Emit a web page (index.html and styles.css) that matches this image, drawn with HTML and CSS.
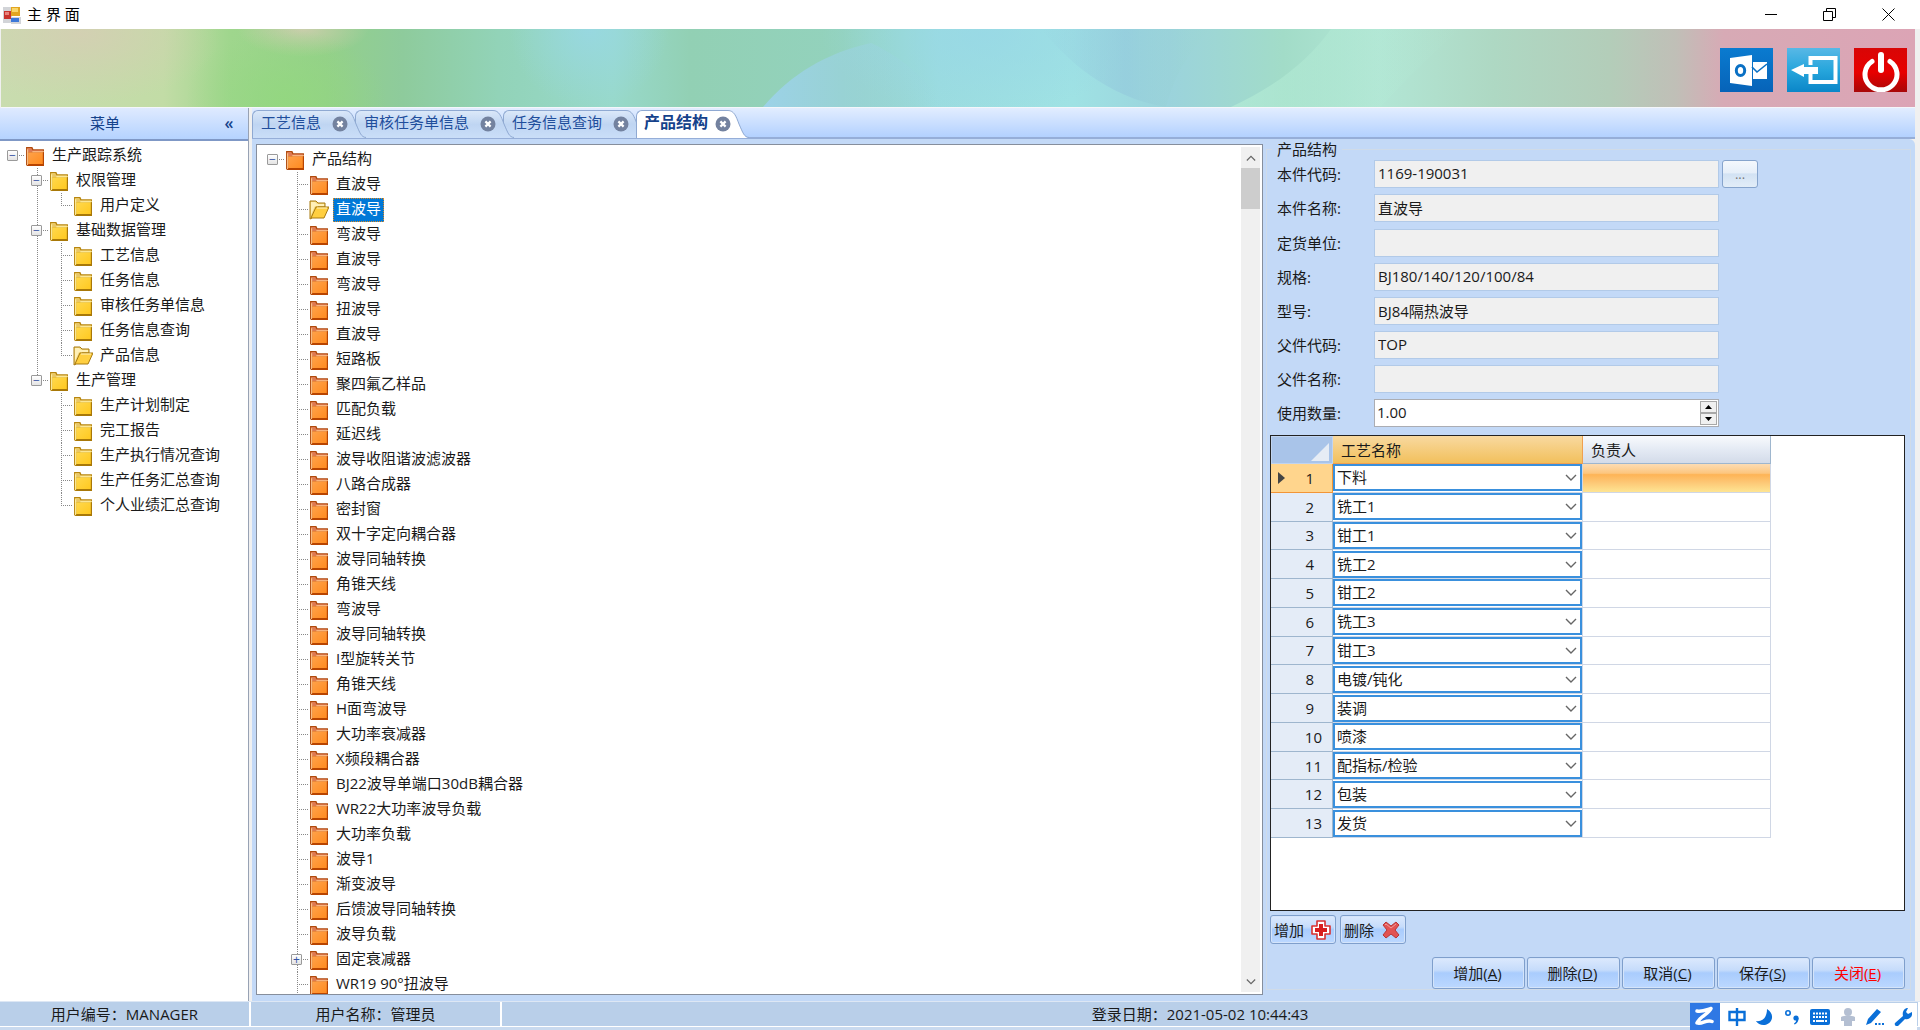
FILE: index.html
```html
<!DOCTYPE html>
<html lang="zh-CN">
<head>
<meta charset="utf-8">
<title>主界面</title>
<link rel="stylesheet" href="styles.css">
</head>
<body>
<svg class="defs" width="0" height="0" aria-hidden="true">
  <defs>
    <linearGradient id="gy" x1="0" y1="0" x2="1" y2="1"><stop offset="0" stop-color="#ffd84d"/><stop offset="1" stop-color="#ffc81e"/></linearGradient>
    <linearGradient id="go" x1="0" y1="0" x2="1" y2="1"><stop offset="0" stop-color="#ffa24a"/><stop offset="1" stop-color="#ff8a1e"/></linearGradient>
    <linearGradient id="tabFill" x1="0" y1="0" x2="0" y2="1"><stop offset="0" stop-color="#dbe8f9"/><stop offset=".5" stop-color="#bfd5f2"/><stop offset="1" stop-color="#cadef8"/></linearGradient>
  </defs>
  <symbol id="fy" viewBox="0 0 19 19">
    <path d="M1 1h6l1 2h10v16H2L1 18z" fill="#b8860f"/><path d="M2 2h4l1 2h10v2H2z" fill="#e9c765"/><path d="M3 6h14v12H3z" fill="url(#gy)"/><path d="M7 5h11v1H7zM2 3h1v15H2z" fill="#fff1a8"/><path d="M3 17h15v2H3zM17 6h1v12h-1z" fill="#a87808"/>
  </symbol>
  <symbol id="fo" viewBox="0 0 19 19">
    <path d="M1 1h6l1 2h10v16H2L1 18z" fill="#b04a0c"/><path d="M2 2h4l1 2h10v2H2z" fill="#dd7a52"/><path d="M3 6h14v12H3z" fill="url(#go)"/><path d="M7 5h11v1H7zM2 3h1v15H2z" fill="#ffc890"/><path d="M3 17h15v2H3zM17 6h1v12h-1z" fill="#b84400"/>
  </symbol>
  <symbol id="fopen" viewBox="0 0 20 20">
    <path d="M1 19V1h6l2 2h7v4H9L3 18z" fill="#f3d77a" stroke="#a87a10"/><path d="M2 2h4l2 2h7v2H6L2 15z" fill="#fff0b8"/><path d="M7 7h13l-5 11H2z" fill="#ffcf40" stroke="#a87a10"/><path d="M8 8h10" stroke="#fff3c0"/>
  </symbol>
  <symbol id="cx" viewBox="0 0 16 16">
    <circle cx="8" cy="8" r="7.5" fill="#73829f"/><path d="M5.4 5.4l5.2 5.2M10.600 5.400l-5.200 5.200" stroke="#fff" stroke-width="2.200"/>
  </symbol>
  <symbol id="cap" viewBox="0 0 22 28">
    <path d="M0 0H1C7 0 9 6 12 14C16 23 17 27 22 28H0Z" fill="var(--tab)"/><path d="M0 .5H1C7 .5 9 6 12 14C16 23 17 27 22 27.500" fill="none" stroke="#8fa9d2"/>
  </symbol>
  <symbol id="chev" viewBox="0 0 12 8"><path d="M1 1l5 5 5-5" fill="none" stroke="#666" stroke-width="1.400"/></symbol>
</svg>

<header class="titlebar">
  <svg width="18" height="18" viewBox="0 0 18 18" aria-hidden="true"><path d="M0 1h9v16H0zM8 11h10v7H8z" fill="#d2d4d8"/><path d="M1 5h7v8H1z" fill="#c8322c"/><path d="M2 6h4v3H2z" fill="#e8837c"/><path d="M8 1h9v9H8z" fill="#e2a520"/><path d="M9 2h6v4H9z" fill="#f8d66a"/><path d="M8 12h8v4H8z" fill="#3c78d8"/></svg>
  <h1>主 界 面</h1>
  <div class="winbtns">
    <button aria-label="最小化"><svg width="12" height="12"><path d="M0 5.500h12" stroke="#000"/></svg></button>
    <button aria-label="还原"><svg width="13" height="13"><path d="M.5 3.500h9v9h-9zM3.500 3.500v-3h9v9h-3" fill="none" stroke="#000"/></svg></button>
    <button aria-label="关闭"><svg width="13" height="13"><path d="M.5.5l12 12M12.500.5l-12 12" stroke="#000"/></svg></button>
  </div>
</header>

<div class="banner">
  <svg class="art" viewBox="0 0 1914 78" preserveAspectRatio="none" aria-hidden="true">
    <defs>
      <linearGradient id="b0">
        <stop offset="0" stop-color="#c9dcaf"/><stop offset=".085" stop-color="#c2dca6"/><stop offset=".12" stop-color="#9fd68d"/><stop offset=".17" stop-color="#94d08a"/><stop offset=".21" stop-color="#8ecb9c"/><stop offset=".26" stop-color="#92d3b8"/><stop offset=".32" stop-color="#98d9cb"/><stop offset=".36" stop-color="#92d0b4"/><stop offset=".44" stop-color="#93d2bd"/><stop offset=".49" stop-color="#9bdcdf"/><stop offset=".56" stop-color="#9fe2e4"/><stop offset=".61" stop-color="#9bd3dc"/><stop offset=".67" stop-color="#a2dcc8"/><stop offset=".72" stop-color="#b2e6d5"/><stop offset=".78" stop-color="#aed8c3"/><stop offset=".84" stop-color="#b3cdb9"/><stop offset=".875" stop-color="#c0bfb7"/><stop offset=".9" stop-color="#d7aab5"/><stop offset="1" stop-color="#dca4b5"/>
      </linearGradient>
      <radialGradient id="b1"><stop offset="0" stop-color="#d6cdb4" stop-opacity=".8"/><stop offset="1" stop-color="#d6cdb4" stop-opacity="0"/></radialGradient>
      <radialGradient id="b2"><stop offset="0" stop-color="#98d8e6" stop-opacity=".8"/><stop offset="1" stop-color="#98d8e6" stop-opacity="0"/></radialGradient>
      <radialGradient id="b3"><stop offset="0" stop-color="#92d87e" stop-opacity=".8"/><stop offset="1" stop-color="#92d87e" stop-opacity="0"/></radialGradient>
      <linearGradient id="b4" x1="0" x2="1"><stop offset="0" stop-color="#9cd2e8"/><stop offset="1" stop-color="#9cd2e4" stop-opacity="0"/></linearGradient>
      <linearGradient id="b5" x1="0" x2="1"><stop offset="0" stop-color="#92c8dc" stop-opacity="0"/><stop offset=".5" stop-color="#92c8dc" stop-opacity=".6"/><stop offset="1" stop-color="#9cd8cc" stop-opacity="0"/></linearGradient>
      <linearGradient id="b6" x1="0" x2="1"><stop offset="0" stop-color="#b4ecd6" stop-opacity=".7"/><stop offset="1" stop-color="#b4ecd6" stop-opacity="0"/></linearGradient>
    </defs>
    <path d="M0 0h1914v78H0z" fill="url(#b0)"/>
    <ellipse cx="80" cy="5" rx="140" ry="70" fill="url(#b1)"/>
    <ellipse cx="302" cy="0" rx="66" ry="28" fill="url(#b1)"/>
    <ellipse cx="285" cy="70" rx="100" ry="70" fill="url(#b3)"/>
    <ellipse cx="588" cy="0" rx="80" ry="80" fill="url(#b2)"/>
    <ellipse cx="980" cy="5" rx="160" ry="80" fill="url(#b2)"/>
    <path d="M762 78C790 45 825 24 870 14C905 30 930 55 942 78z" fill="url(#b4)"/>
    <path d="M1040 0h170c-30 30-40 60-45 78c-60-10-100-48-125-78z" fill="url(#b5)"/>
    <path d="M1230 78C1280 55 1310 28 1330 0h130c-30 25-60 55-80 78z" fill="url(#b6)"/>
  </svg>
  <nav class="quick">
    <button aria-label="邮件"><svg viewBox="0 0 53 44"><defs><linearGradient id="q1" x2="0" y2="1"><stop stop-color="#0a7bd0"/><stop offset="1" stop-color="#0763b8"/></linearGradient><linearGradient id="q2" x2="0" y2="1"><stop stop-color="#58b8e6"/><stop offset=".5" stop-color="#27a6dc"/><stop offset="1" stop-color="#0b86c8"/></linearGradient><linearGradient id="q3" x2="0" y2="1"><stop stop-color="#d80606"/><stop offset=".55" stop-color="#e80000"/><stop offset="1" stop-color="#a80808"/></linearGradient></defs><path d="M0 0h53v44H0z" fill="url(#q1)"/><path d="M10 10l22-3v31l-22-3z" fill="#fff"/><ellipse cx="20.500" cy="22.500" rx="4.200" ry="5" fill="none" stroke="#0a70c4" stroke-width="3"/><path d="M33 14h14v17H33z" fill="#fff"/><path d="M32 19l5 5 10-8" fill="none" stroke="#0a70c4" stroke-width="1.600"/></svg></button>
    <button aria-label="注销"><svg viewBox="0 0 53 44"><path d="M0 0h53v44H0z" fill="url(#q2)"/><path d="M23.500 17V10h25v24h-25v-8" fill="none" stroke="#fff" stroke-width="4"/><path d="M4 22l13-6v3h14v7H17v3z" fill="#fff"/></svg></button>
    <button aria-label="退出"><svg viewBox="0 0 53 44"><path d="M0 0h53v44H0z" fill="url(#q3)"/><path d="M18 13.500A16 15.500 0 1 0 36 13.500" fill="none" stroke="#fff" stroke-width="5" stroke-linecap="round"/><path d="M27 7v15" stroke="#fff" stroke-width="6" stroke-linecap="round"/></svg></button>
  </nav>
</div>

<div class="workspace">
  <aside class="sidebar">
    <div class="sidehead"><h2>菜单</h2><button aria-label="收起">«</button></div>
    <ul class="tree root">
      <li><div class="row"><button class="tg" aria-label="折叠">−</button><svg><use href="#fo"/></svg><span>生产跟踪系统</span></div>
        <ul>
          <li><div class="row"><button class="tg" aria-label="折叠">−</button><svg><use href="#fy"/></svg><span>权限管理</span></div>
            <ul><li><div class="row"><i></i><svg><use href="#fy"/></svg><span>用户定义</span></div></li></ul></li>
          <li><div class="row"><button class="tg" aria-label="折叠">−</button><svg><use href="#fy"/></svg><span>基础数据管理</span></div>
            <ul>
              <li><div class="row"><i></i><svg><use href="#fy"/></svg><span>工艺信息</span></div></li>
              <li><div class="row"><i></i><svg><use href="#fy"/></svg><span>任务信息</span></div></li>
              <li><div class="row"><i></i><svg><use href="#fy"/></svg><span>审核任务单信息</span></div></li>
              <li><div class="row"><i></i><svg><use href="#fy"/></svg><span>任务信息查询</span></div></li>
              <li><div class="row"><i></i><svg><use href="#fopen"/></svg><span>产品信息</span></div></li>
            </ul></li>
          <li><div class="row"><button class="tg" aria-label="折叠">−</button><svg><use href="#fy"/></svg><span>生产管理</span></div>
            <ul>
              <li><div class="row"><i></i><svg><use href="#fy"/></svg><span>生产计划制定</span></div></li>
              <li><div class="row"><i></i><svg><use href="#fy"/></svg><span>完工报告</span></div></li>
              <li><div class="row"><i></i><svg><use href="#fy"/></svg><span>生产执行情况查询</span></div></li>
              <li><div class="row"><i></i><svg><use href="#fy"/></svg><span>生产任务汇总查询</span></div></li>
              <li><div class="row"><i></i><svg><use href="#fy"/></svg><span>个人业绩汇总查询</span></div></li>
            </ul></li>
        </ul></li>
    </ul>
  </aside>

  <main class="main">
    <nav class="tabs">
      <div class="tab t1"><a href="#">工艺信息</a><button aria-label="关闭"><svg><use href="#cx"/></svg></button><svg class="cap"><use href="#cap"/></svg></div>
      <div class="tab t2"><a href="#">审核任务单信息</a><button aria-label="关闭"><svg><use href="#cx"/></svg></button><svg class="cap"><use href="#cap"/></svg></div>
      <div class="tab t3"><a href="#">任务信息查询</a><button aria-label="关闭"><svg><use href="#cx"/></svg></button><svg class="cap"><use href="#cap"/></svg></div>
      <div class="tab active"><a href="#">产品结构</a><button aria-label="关闭"><svg><use href="#cx"/></svg></button><svg class="cap"><use href="#cap"/></svg></div>
    </nav>
    <div class="page">
      <section class="treebox">
        <ul class="tree">
          <li><div class="row"><button class="tg" aria-label="折叠">−</button><svg><use href="#fo"/></svg><span>产品结构</span></div>
            <ul class="open">
              <li><div class="row"><i></i><svg><use href="#fo"/></svg><span>直波导</span></div></li>
              <li><div class="row"><i></i><svg><use href="#fopen"/></svg><span class="sel">直波导</span></div></li>
              <li><div class="row"><i></i><svg><use href="#fo"/></svg><span>弯波导</span></div></li>
              <li><div class="row"><i></i><svg><use href="#fo"/></svg><span>直波导</span></div></li>
              <li><div class="row"><i></i><svg><use href="#fo"/></svg><span>弯波导</span></div></li>
              <li><div class="row"><i></i><svg><use href="#fo"/></svg><span>扭波导</span></div></li>
              <li><div class="row"><i></i><svg><use href="#fo"/></svg><span>直波导</span></div></li>
              <li><div class="row"><i></i><svg><use href="#fo"/></svg><span>短路板</span></div></li>
              <li><div class="row"><i></i><svg><use href="#fo"/></svg><span>聚四氟乙样品</span></div></li>
              <li><div class="row"><i></i><svg><use href="#fo"/></svg><span>匹配负载</span></div></li>
              <li><div class="row"><i></i><svg><use href="#fo"/></svg><span>延迟线</span></div></li>
              <li><div class="row"><i></i><svg><use href="#fo"/></svg><span>波导收阻谐波滤波器</span></div></li>
              <li><div class="row"><i></i><svg><use href="#fo"/></svg><span>八路合成器</span></div></li>
              <li><div class="row"><i></i><svg><use href="#fo"/></svg><span>密封窗</span></div></li>
              <li><div class="row"><i></i><svg><use href="#fo"/></svg><span>双十字定向耦合器</span></div></li>
              <li><div class="row"><i></i><svg><use href="#fo"/></svg><span>波导同轴转换</span></div></li>
              <li><div class="row"><i></i><svg><use href="#fo"/></svg><span>角锥天线</span></div></li>
              <li><div class="row"><i></i><svg><use href="#fo"/></svg><span>弯波导</span></div></li>
              <li><div class="row"><i></i><svg><use href="#fo"/></svg><span>波导同轴转换</span></div></li>
              <li><div class="row"><i></i><svg><use href="#fo"/></svg><span>I型旋转关节</span></div></li>
              <li><div class="row"><i></i><svg><use href="#fo"/></svg><span>角锥天线</span></div></li>
              <li><div class="row"><i></i><svg><use href="#fo"/></svg><span>H面弯波导</span></div></li>
              <li><div class="row"><i></i><svg><use href="#fo"/></svg><span>大功率衰减器</span></div></li>
              <li><div class="row"><i></i><svg><use href="#fo"/></svg><span>X频段耦合器</span></div></li>
              <li><div class="row"><i></i><svg><use href="#fo"/></svg><span>BJ22波导单端口30dB耦合器</span></div></li>
              <li><div class="row"><i></i><svg><use href="#fo"/></svg><span>WR22大功率波导负载</span></div></li>
              <li><div class="row"><i></i><svg><use href="#fo"/></svg><span>大功率负载</span></div></li>
              <li><div class="row"><i></i><svg><use href="#fo"/></svg><span>波导1</span></div></li>
              <li><div class="row"><i></i><svg><use href="#fo"/></svg><span>渐变波导</span></div></li>
              <li><div class="row"><i></i><svg><use href="#fo"/></svg><span>后馈波导同轴转换</span></div></li>
              <li><div class="row"><i></i><svg><use href="#fo"/></svg><span>波导负载</span></div></li>
              <li><div class="row"><button class="tg" aria-label="展开">+</button><svg><use href="#fo"/></svg><span>固定衰减器</span></div></li>
              <li><div class="row"><i></i><svg><use href="#fo"/></svg><span>WR19 90°扭波导</span></div></li>
            </ul></li>
        </ul>
        <div class="scroll">
          <button class="up" aria-label="向上"><svg><use href="#chev"/></svg></button>
          <div class="thumb"></div>
          <button class="down" aria-label="向下"><svg><use href="#chev"/></svg></button>
        </div>
      </section>

      <fieldset class="detail">
        <legend>产品结构</legend>
        <div class="body">
          <div class="fields">
            <div class="field"><label for="f1">本件代码:</label><input id="f1" value="1169-190031" readonly><button class="more">...</button></div>
            <div class="field"><label for="f2">本件名称:</label><input id="f2" value="直波导" readonly></div>
            <div class="field next"><label for="f3">定货单位:</label><input id="f3" readonly></div>
            <div class="field"><label for="f4">规格:</label><input id="f4" value="BJ180/140/120/100/84" readonly></div>
            <div class="field"><label for="f5">型号:</label><input id="f5" value="BJ84隔热波导" readonly></div>
            <div class="field"><label for="f6">父件代码:</label><input id="f6" value="TOP" readonly></div>
            <div class="field"><label for="f7">父件名称:</label><input id="f7" readonly></div>
            <div class="field"><label for="f8">使用数量:</label><div class="num"><input id="f8" value="1.00"><div class="spin"><button aria-label="增"><svg width="7" height="4"><path d="M0 4l3.500-4L7 4z"/></svg></button><button aria-label="减"><svg width="7" height="4"><path d="M0 0l3.500 4L7 0z"/></svg></button></div></div></div>
          </div>
          <div class="gridbox">
            <table>
              <colgroup><col class="c0"><col class="c1"><col class="c2"></colgroup>
              <thead><tr><th class="corner"><svg width="18" height="18"><path d="M18 0v18H0z" fill="#e6ecf5"/></svg></th><th class="hot">工艺名称</th><th>负责人</th></tr></thead>
              <tbody>
                <tr class="cur"><th><svg width="7" height="12"><path d="M0 0l7 6-7 6z" fill="#444"/></svg>1</th><td><div class="combo"><select aria-label="工艺 1"><option>下料</option></select><svg><use href="#chev"/></svg></div></td><td></td></tr>
                <tr><th>2</th><td><div class="combo"><select aria-label="工艺 2"><option>铣工1</option></select><svg><use href="#chev"/></svg></div></td><td></td></tr>
                <tr><th>3</th><td><div class="combo"><select aria-label="工艺 3"><option>钳工1</option></select><svg><use href="#chev"/></svg></div></td><td></td></tr>
                <tr><th>4</th><td><div class="combo"><select aria-label="工艺 4"><option>铣工2</option></select><svg><use href="#chev"/></svg></div></td><td></td></tr>
                <tr><th>5</th><td><div class="combo"><select aria-label="工艺 5"><option>钳工2</option></select><svg><use href="#chev"/></svg></div></td><td></td></tr>
                <tr><th>6</th><td><div class="combo"><select aria-label="工艺 6"><option>铣工3</option></select><svg><use href="#chev"/></svg></div></td><td></td></tr>
                <tr><th>7</th><td><div class="combo"><select aria-label="工艺 7"><option>钳工3</option></select><svg><use href="#chev"/></svg></div></td><td></td></tr>
                <tr><th>8</th><td><div class="combo"><select aria-label="工艺 8"><option>电镀/钝化</option></select><svg><use href="#chev"/></svg></div></td><td></td></tr>
                <tr><th>9</th><td><div class="combo"><select aria-label="工艺 9"><option>装调</option></select><svg><use href="#chev"/></svg></div></td><td></td></tr>
                <tr><th>10</th><td><div class="combo"><select aria-label="工艺 10"><option>喷漆</option></select><svg><use href="#chev"/></svg></div></td><td></td></tr>
                <tr><th>11</th><td><div class="combo"><select aria-label="工艺 11"><option>配指标/检验</option></select><svg><use href="#chev"/></svg></div></td><td></td></tr>
                <tr><th>12</th><td><div class="combo"><select aria-label="工艺 12"><option>包装</option></select><svg><use href="#chev"/></svg></div></td><td></td></tr>
                <tr><th>13</th><td><div class="combo"><select aria-label="工艺 13"><option>发货</option></select><svg><use href="#chev"/></svg></div></td><td></td></tr>
              </tbody>
            </table>
          </div>
          <div class="rowbtns">
            <button class="btn">增加<svg width="20" height="20" viewBox="0 0 20 20"><path d="M6 1h8v5h5v8h-5v5H6v-5H1V6h5z" fill="#fff" stroke="#d83030" stroke-width="1.600" stroke-linejoin="round"/><path d="M8 4h4v4h4v4h-4v4H8v-4H4V8h4z" fill="#d81e1e"/></svg></button>
            <button class="btn">删除<svg width="20" height="20" viewBox="0 0 20 20"><path d="M2 5l3-3 5 4 5-4 3 3-4 5 4 5-3 3-5-4-5 4-3-3 4-5z" fill="#e25252" stroke="#b83636" stroke-linejoin="round"/><path d="M4 5l1-1 5 4 5-4" fill="none" stroke="#f09a9a"/></svg></button>
          </div>
          <div class="actions">
            <button class="btn">增加(<u>A</u>)</button><button class="btn">删除(<u>D</u>)</button><button class="btn">取消(<u>C</u>)</button><button class="btn">保存(<u>S</u>)</button><button class="btn red">关闭(<u>E</u>)</button>
          </div>
        </div>
      </fieldset>
    </div>
  </main>
</div>

<footer class="status">
  <div class="s1">用户编号：MANAGER</div>
  <div class="s2">用户名称：管理员</div>
  <div class="s3">登录日期：2021-05-02 10:44:43</div>
  <div class="ime">
    <svg class="logo" width="30" height="27" viewBox="0 0 30 27"><path d="M0 0h30v27H0z" fill="#2f78e4"/><path d="M7 8c5 1 9-1 14-2.500c-1 3-6 6-9 8.500s-3 3-5 6c5 2 9-4 15-1.500" fill="none" stroke="#fff" stroke-width="3.500" stroke-linecap="round" stroke-linejoin="round"/></svg>
    <svg width="18" height="18" viewBox="0 0 18 18"><path d="M1.500 4h15v8h-15zM9 0v18" fill="none" stroke="#0a6fd8" stroke-width="2.400"/></svg>
    <svg width="18" height="18" viewBox="0 0 18 18"><path d="M11 1c8 5 6 14-2 16C5 17.500 2 16 0 13c7 1 11-4 11-12z" fill="#0a6fd8"/></svg>
    <svg width="16" height="18" viewBox="0 0 16 18"><circle cx="4" cy="5" r="2.200" fill="none" stroke="#0a6fd8" stroke-width="1.600"/><circle cx="12" cy="10" r="2.600" fill="#0a6fd8"/><path d="M14.500 10c0 4-2 6-4 6.500l-.5-1c2-1 2.500-3 2-5z" fill="#0a6fd8"/></svg>
    <svg width="20" height="16" viewBox="0 0 20 16"><rect width="20" height="16" rx="2" fill="#0a6fd8"/><path d="M3 4.500h14M3 8h14" stroke="#fff" stroke-width="2" stroke-dasharray="2 1"/><path d="M3 12h2m1 0h8m1 0h2" stroke="#fff" stroke-width="2"/></svg>
    <svg width="16" height="18" viewBox="0 0 16 18"><circle cx="8" cy="4" r="4" fill="#b4bfd2"/><path d="M1 9c4-2 10-2 14 0v4h-3v5H4v-5H1z" fill="#b4bfd2"/></svg>
    <svg width="18" height="18" viewBox="0 0 18 18"><path d="M0 17l2-6L11 1l4 3L5 15zM9 15h2v2H9zM12.500 15h2v2h-2zM16 15h2v2h-2z" fill="#0a6fd8"/></svg>
    <svg width="18" height="18" viewBox="0 0 18 18"><path d="M1 15l8-7C8 4 10 0 14 0l-2 4 2 2 4-2c1 5-3 8-7 7l-7 7c-2 1-4-1-3-3z" fill="#0a6fd8"/></svg>
  </div>
</footer>
</body>
</html>
```

FILE: styles.css
```css
* { box-sizing: border-box; }
body {
  margin: 0; height: 100vh; display: flex; flex-direction: column; overflow: hidden;
  font: 15px/20px "Open Sans", "Noto Sans CJK SC", sans-serif; color: #1a1a1a; background: #f0f0f0;
}
button, input, select { font: inherit; color: inherit; margin: 0; padding: 0; }
button { background: none; border: 0; }
h1, h2 { margin: 0; font-size: 15px; font-weight: 400; }
ul { list-style: none; margin: 0; padding: 0; }
.defs { position: absolute; }

.titlebar { flex: none; height: 29px; display: flex; align-items: center; background: #fff; padding: 0 25px 0 3px; }
.titlebar h1 { margin-left: 6px; color: #000; padding-bottom: 1px; }
.winbtns { margin-left: auto; display: flex; gap: 46px; }
.winbtns button { width: 13px; height: 20px; display: flex; align-items: center; justify-content: center; }

.banner { flex: none; height: 79px; display: flex; align-items: center; justify-content: flex-end; position: relative; margin: 0 5px 0 1px; padding-right: 8px; border-bottom: 1px solid #f4f6fa; }
.art { position: absolute; inset: 0; width: 100%; height: 100%; }
.quick { display: flex; gap: 14px; position: relative; padding-top: 3px; }
.quick button { width: 53px; height: 44px; }
.quick svg { display: block; width: 53px; height: 44px; }

.workspace { flex: 1; min-height: 0; display: flex; gap: 3px; padding-right: 5px; }
.sidebar { flex: none; width: 249px; background: #fff; border-right: 1px solid #98a2b4; }
.sidehead { height: 33px; display: flex; align-items: center; border-bottom: 2px solid #7f98c6; background: linear-gradient(#dfeaff, #b5d3ff); color: #15428b; padding: 0 12px 2px 0; }
.sidehead h2 { flex: 1; text-align: center; padding-right: 12px; }
.sidehead button { font-size: 16px; font-weight: 600; width: 14px; }

.tree { padding: 2px 0 0 1px; }
.tree ul { padding-left: 24px; }
.tree li li { background: repeating-linear-gradient(#888 0 1px, transparent 1px 2px) 12px 0 / 1px 100% no-repeat; }
.tree li li:last-child { background-size: 1px 13px; }
.tree .open > li:last-child { background-size: 1px 100%; }
.row { display: flex; align-items: center; height: 25px; background: repeating-linear-gradient(90deg, #888 0 1px, transparent 1px 2px) 12px 12px / 12px 1px no-repeat; }
.row > i { width: 24px; }
.row svg { flex: none; width: 20px; height: 20px; }
.row span { margin-left: 4px; padding: 0 3px; height: 24px; line-height: 21px; white-space: nowrap; }
.row .sel { background: #0078d7; color: #fff; outline: 1px dotted #e08a20; outline-offset: -1px; }
.tg { width: 11px; height: 11px; margin: 0 7px 0 6px; border: 1px solid #9a9a9a; border-radius: 1px; background: linear-gradient(#fff, #e4e4e4); color: #3454a4; font-size: 12px; line-height: 9px; display: flex; align-items: center; justify-content: center; }

.main { flex: 1; min-width: 0; display: flex; flex-direction: column; }
.tabs { flex: none; height: 31px; display: flex; align-items: flex-start; padding-top: 2px; border-bottom: 2px solid #96aed8; background: linear-gradient(#e2edff, #b3d1ff); }
.tab { --tab: url(#tabFill); position: relative; display: flex; align-items: center; height: 28px; border: solid #8fa9d2; border-width: 1px 0 0 1px; border-radius: 6px 0 0 0; padding-left: 8px; background: linear-gradient(#dbe8f9, #bfd5f2 50%, #cadef8); margin-right: 11px; }
.t1 { z-index: 3; }
.t2 { z-index: 2; }
.t3 { z-index: 1; }
.tab a { color: #1f4e9c; text-decoration: none; line-height: 20px; padding-bottom: 6px; }
.tab button { position: relative; z-index: 1; width: 16px; height: 16px; margin: 0 -4px 2px 11px; }
.tab button svg { display: block; width: 16px; height: 16px; }
.cap { position: absolute; left: 100%; top: -1px; width: 22px; height: 28px; }
.active { --tab: #fff; z-index: 4; background: #fff; padding-left: 7px; }
.active a { font-size: 16px; font-weight: 700; color: #15428b; }
.active button { margin-left: 7px; }

.page { flex: 1; min-height: 0; display: flex; gap: 3px; background: #c3d9f7; padding: 0 4px 6px; border-radius: 0 6px 0 0; }
.treebox { flex: 1; min-width: 0; display: flex; margin-top: 5px; background: #fff; border: 1px solid #868e9c; overflow: hidden; }
.treebox .tree { flex: 1; padding: 2px 0 0 4px; }
.scroll { width: 19px; margin: 2px 2px 2px 0; background: #f0f0f0; display: flex; flex-direction: column; }
.scroll button { height: 21px; display: flex; align-items: center; justify-content: center; }
.scroll svg { width: 10px; height: 8px; }
.up svg { transform: rotate(180deg); }
.down { margin-top: auto; }
.thumb { height: 41px; background: #cdcdcd; }

.detail { flex: none; width: 645px; min-width: 0; margin: 0 0 5px; padding: 0 5px 0 3px; border: 1px solid #d0dbe8; display: flex; flex-direction: column; }
.detail legend { padding: 0 5px; margin-left: 2px; line-height: 20px; }
.body { flex: 1; min-height: 0; display: flex; flex-direction: column; }
.fields { display: flex; flex-direction: column; gap: 6px; padding: 1px 0 8px 7px; }
.field { display: flex; align-items: center; height: 28px; }
.field.next { margin-top: 1px; }
.field label { width: 97px; }
.field input { width: 345px; height: 28px; border: 1px solid #b2cae8; background: #f0f0f0; padding: 0 0 2px 3px; outline: 0; }
.more { width: 36px; height: 28px; margin-left: 3px; border: 1px solid #86a4cc; border-radius: 3px; background: linear-gradient(#f4f8fd, #e6eff9 45%, #d2e2f3 50%, #e2edf8); color: #777; font-size: 13px; }
.num { display: flex; width: 345px; height: 28px; background: #fff; border: 1px solid #abadb3; padding: 1px; }
.field .num input { flex: 1; min-width: 0; height: 24px; border: 0; background: #fff; padding-left: 1px; }
.spin { width: 17px; display: flex; flex-direction: column; }
.spin button { flex: 1; min-height: 0; border: 1px solid #a8a8a8; background: #f0f0f0; display: flex; align-items: center; justify-content: center; }

.gridbox { flex: 1; min-height: 0; border: 1px solid #222; background: #fff; }
table { width: 500px; height: 402px; table-layout: fixed; border-collapse: separate; border-spacing: 0; }
.c0 { width: 62px; }
.c1 { width: 250px; }
.c2 { width: 188px; }
th { font-weight: 400; padding: 0; }
td { padding: 0; border-right: 1px solid #d0d7e5; border-bottom: 1px solid #d0d7e5; }
thead th { height: 28px; text-align: left; padding-left: 8px; background: linear-gradient(#f8fafd, #e4eaf4 50%, #d3dbe9); border: solid #9eb6ce; border-width: 0 1px 1px 0; line-height: 20px; }
thead .hot { background: linear-gradient(#f8d9a0, #f2c05c); border-color: #f0a050; }
thead .corner { background: #a9c4e9; border: 1px solid #c0d4f0; text-align: right; padding: 4px 3px 0 0; }
.corner svg { display: block; margin-left: auto; }
tbody th { background: #e4ecf7; border: solid #9eb6ce; border-width: 0 1px 1px 0; text-align: right; padding-right: 18px; }
tbody tr:nth-child(n+10) th { padding-right: 10px; }
.cur th { background: #ffd58d; border-color: #f29536; }
.cur th svg { margin-right: 20px; }
.cur td:last-child { background: linear-gradient(#fcdcb4, #fdc67e 33%, #feb456 38%, #fdc775 65%, #fee593); }
.combo { position: relative; height: 27px; }
.combo select { appearance: none; display: block; width: 100%; height: 27px; border: 2px solid #3a90dd; background: #fff; padding: 0 0 1px 2px; border-radius: 0; }
.combo svg { position: absolute; right: 5px; top: 10px; width: 12px; height: 8px; pointer-events: none; }

.btn { border: 1px solid #7f9fcc; border-radius: 3px; background: linear-gradient(#dce9fd, #c6dcfb 40%, #a9ccfd 50%, #bcd8ff); box-shadow: inset 0 0 0 1px #d4e4fa; }
.rowbtns { display: flex; gap: 4px; padding-top: 4px; }
.rowbtns .btn { width: 66px; height: 29px; display: flex; align-items: center; gap: 7px; padding-left: 3px; }
.actions { display: flex; justify-content: flex-end; gap: 2px; padding-top: 13px; }
.actions .btn { width: 93px; height: 32px; padding-right: 2px; }
.red { color: #f00; }

.status { flex: none; height: 29px; display: flex; position: relative; background: #b9cfe9; border-top: 1px solid #dde7f4; border-bottom: 3px solid #c9daef; text-align: center; line-height: 24px; }
.status > div { border: solid #fff; border-width: 0 2px 1px 0; }
.s1 { width: 251px; }
.s2 { width: 251px; }
.s3 { flex: 1; padding-right: 20px; }
.status .ime { position: absolute; right: 3px; bottom: -3px; height: 27px; display: flex; align-items: center; gap: 10px; background: #fff; border: 0; width: 227px; }
.ime svg { flex: none; }
.ime .logo { margin-right: -2px; }
```
